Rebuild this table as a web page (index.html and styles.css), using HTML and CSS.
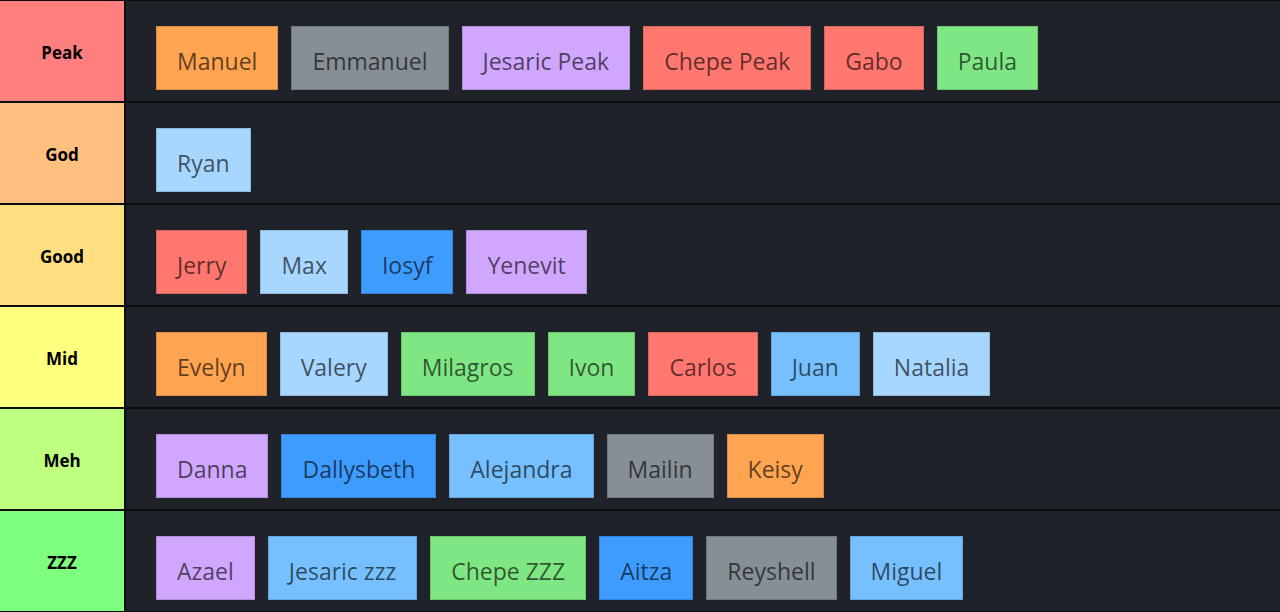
FILE: index.html
```html
<!DOCTYPE html>
<html>
<head>
<meta charset="utf-8">
<link rel="stylesheet" href="styles.css">
</head>
<body>
<div class="board">
  <div class="row">
    <div class="label peak">Peak</div>
    <div class="items">
      <div class="tile orange">Manuel</div>
      <div class="tile gray">Emmanuel</div>
      <div class="tile purple">Jesaric Peak</div>
      <div class="tile red">Chepe Peak</div>
      <div class="tile red">Gabo</div>
      <div class="tile green">Paula</div>
    </div>
  </div>
  <div class="row">
    <div class="label god">God</div>
    <div class="items">
      <div class="tile sky">Ryan</div>
    </div>
  </div>
  <div class="row">
    <div class="label good">Good</div>
    <div class="items">
      <div class="tile red">Jerry</div>
      <div class="tile sky">Max</div>
      <div class="tile blue">Iosyf</div>
      <div class="tile purple">Yenevit</div>
    </div>
  </div>
  <div class="row">
    <div class="label mid">Mid</div>
    <div class="items">
      <div class="tile orange">Evelyn</div>
      <div class="tile sky">Valery</div>
      <div class="tile green">Milagros</div>
      <div class="tile green">Ivon</div>
      <div class="tile red">Carlos</div>
      <div class="tile azure">Juan</div>
      <div class="tile sky">Natalia</div>
    </div>
  </div>
  <div class="row">
    <div class="label meh">Meh</div>
    <div class="items">
      <div class="tile purple">Danna</div>
      <div class="tile blue">Dallysbeth</div>
      <div class="tile azure">Alejandra</div>
      <div class="tile gray">Mailin</div>
      <div class="tile orange">Keisy</div>
    </div>
  </div>
  <div class="row">
    <div class="label zzz">ZZZ</div>
    <div class="items">
      <div class="tile purple">Azael</div>
      <div class="tile azure">Jesaric zzz</div>
      <div class="tile green">Chepe ZZZ</div>
      <div class="tile blue">Aitza</div>
      <div class="tile gray">Reyshell</div>
      <div class="tile azure">Miguel</div>
    </div>
  </div>
</div>
</body>
</html>
```

FILE: styles.css
```css
html, body {
  margin: 0;
  padding: 0;
  background: #0b0c0e;
}
body {
  width: 1280px;
  height: 612px;
  overflow: hidden;
  font-family: "Open Sans", "Noto Sans", sans-serif;
}
.board {
  display: flex;
  flex-direction: column;
  gap: 2px;
  padding-top: 1px;
}
.row {
  display: flex;
  height: 100px;
  gap: 2px;
}
.label {
  width: 124px;
  flex: none;
  display: flex;
  align-items: center;
  justify-content: center;
  padding-top: 2px;
  box-sizing: border-box;
  font-family: "Open Sans", sans-serif;
  font-weight: 700;
  font-size: 17px;
  color: #000;
}
.peak { background: #ff7f7f; }
.god { background: #ffbf7f; }
.good { background: #ffdf7f; }
.mid { background: #ffff7f; }
.meh { background: #bfff7f; }
.zzz { background: #7fff7f; }
.items {
  flex: 1;
  background: #1f2229;
  display: flex;
  align-items: flex-start;
  gap: 13px;
  padding: 25px 0 0 30px;
}
.tile {
  height: 64px;
  box-sizing: border-box;
  padding: 6px 20px 0;
  display: flex;
  align-items: center;
  font-size: 23px;
  color: rgba(0, 0, 0, 0.64);
  border: 1px solid rgba(0, 0, 0, 0.15);
}
.orange { background: #ffa552; }
.gray { background: #868e96; }
.purple { background: #d0a7ff; }
.red { background: #ff776f; }
.green { background: #7fe684; }
.sky { background: #a7d6ff; }
.blue { background: #3f9cff; }
.azure { background: #77c0ff; }
```
